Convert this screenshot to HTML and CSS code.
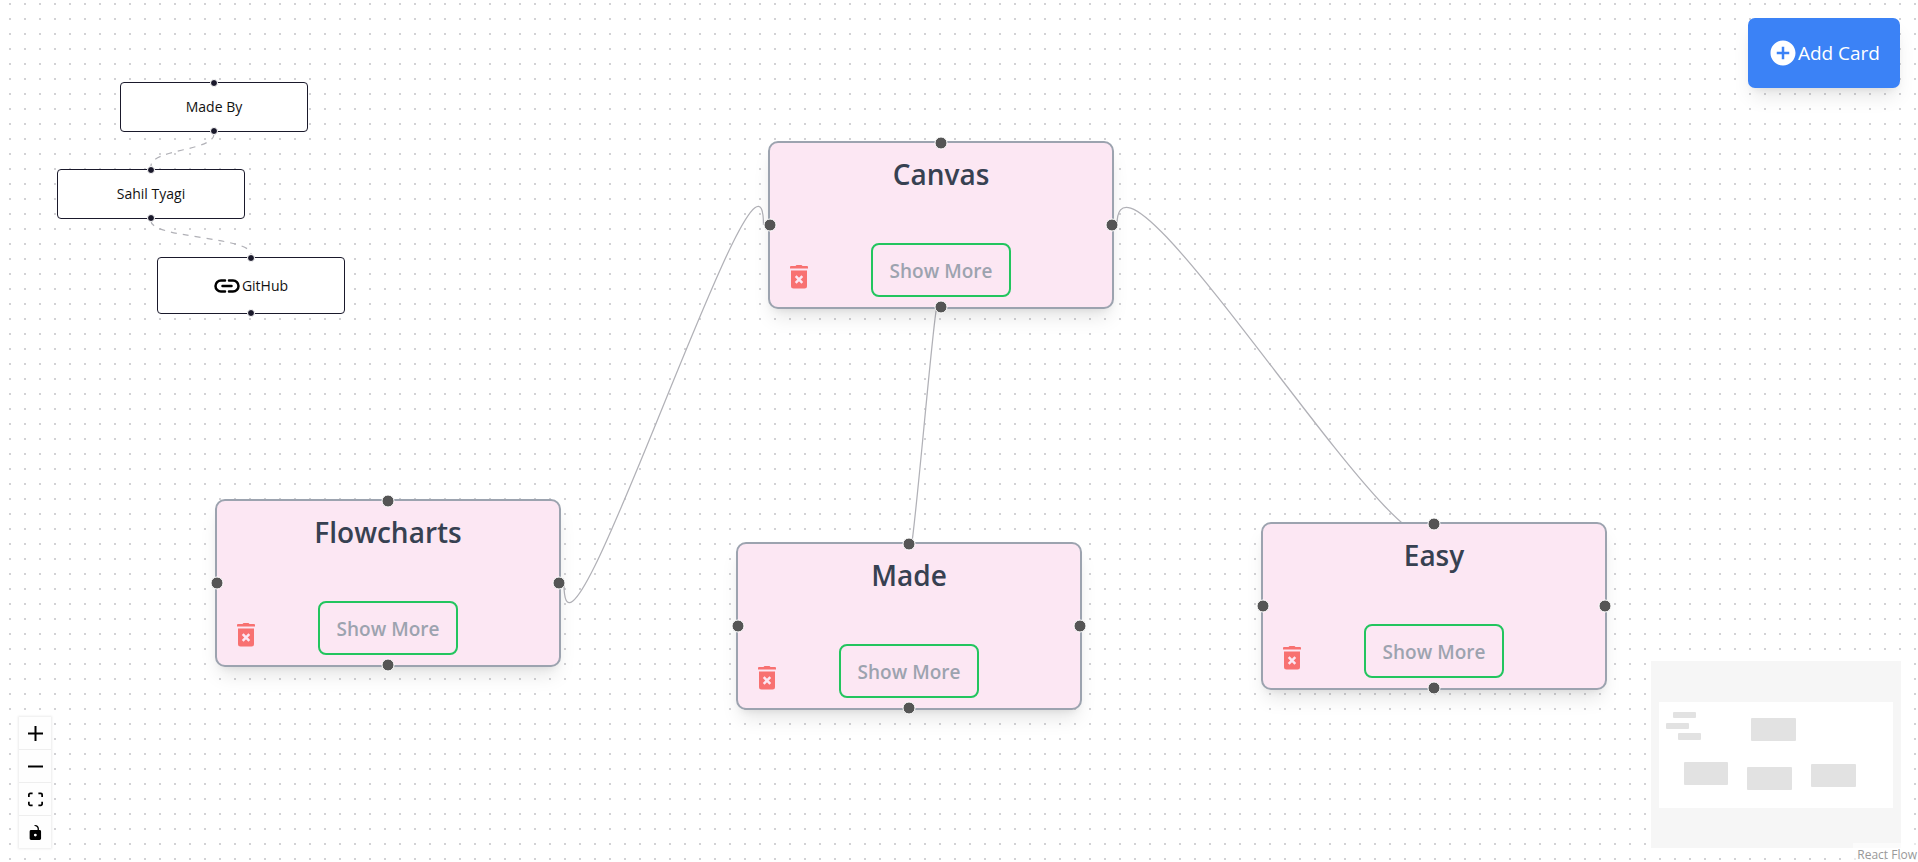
FILE: index.html
```html
<!DOCTYPE html>
<html lang="en">
<head>
<meta charset="utf-8">
<title>React Flow</title>
<link rel="stylesheet" href="styles.css">
</head>
<body>
<svg class="defs" aria-hidden="true">
  <symbol id="trash" viewBox="0 0 18 24">
    <path fill="currentColor" d="M5.500 1 6.500 0h5l1 1H17q1 0 1 1v1.500H0V2q0-1 1-1zM1 5.500h16V21q0 2.500-2.500 2.500h-11Q1 23.500 1 21z"/>
    <path class="trash-cross" d="M5.700 11.200l6.600 6.600M12.300 11.200l-6.600 6.600"/>
  </symbol>
</svg>
<main class="flow">
  <svg class="edges" aria-hidden="true">
    <path class="dashed" d="M214 134C214 151 151 149 151 166"/>
    <path class="dashed" d="M151 221C151 238 251 237 251 254"/>
    <path d="M763.500 225C763.500 92 564 717 564 584"/>
    <path d="M940 313C940 208 908 645 908 540"/>
    <path d="M1117 225C1117 105 1434 638 1434 518"/>
  </svg>

  <div class="node credit made-by"><i class="dot top"></i>Made By<i class="dot bottom"></i></div>
  <div class="node credit author"><i class="dot top"></i>Sahil Tyagi<i class="dot bottom"></i></div>
  <div class="node credit github"><i class="dot top"></i><a href="#"><svg class="link-icon" viewBox="0 0 26 14" aria-hidden="true"><path d="M11 1.500H7a5.500 5.500 0 0 0 0 11h4M15 1.500h4a5.500 5.500 0 0 1 0 11h-4M8.500 7h9"/></svg>GitHub</a><i class="dot bottom"></i></div>

  <article class="node card canvas"><i class="dot top"></i><i class="dot left"></i><i class="dot right"></i><i class="dot bottom"></i>
    <h2>Canvas</h2>
    <div class="actions"><button class="delete" aria-label="Delete"><svg><use href="#trash"/></svg></button><button class="more">Show More</button></div>
  </article>
  <article class="node card flowcharts"><i class="dot top"></i><i class="dot left"></i><i class="dot right"></i><i class="dot bottom"></i>
    <h2>Flowcharts</h2>
    <div class="actions"><button class="delete" aria-label="Delete"><svg><use href="#trash"/></svg></button><button class="more">Show More</button></div>
  </article>
  <article class="node card made"><i class="dot top"></i><i class="dot left"></i><i class="dot right"></i><i class="dot bottom"></i>
    <h2>Made</h2>
    <div class="actions"><button class="delete" aria-label="Delete"><svg><use href="#trash"/></svg></button><button class="more">Show More</button></div>
  </article>
  <article class="node card easy"><i class="dot top"></i><i class="dot left"></i><i class="dot right"></i><i class="dot bottom"></i>
    <h2>Easy</h2>
    <div class="actions"><button class="delete" aria-label="Delete"><svg><use href="#trash"/></svg></button><button class="more">Show More</button></div>
  </article>

  <button class="add-card"><svg viewBox="0 0 24 24" aria-hidden="true"><path fill="currentColor" d="M12 2C6.480 2 2 6.480 2 12s4.480 10 10 10 10-4.480 10-10S17.520 2 12 2zm5 11h-4v4h-2v-4H7v-2h4V7h2v4h4v2z"/></svg>Add Card</button>

  <div class="controls">
    <button aria-label="Zoom in"><svg viewBox="0 0 32 32"><path d="M32 18.133H18.133V32h-4.266V18.133H0v-4.266h13.867V0h4.266v13.867H32z"/></svg></button>
    <button aria-label="Zoom out"><svg viewBox="0 0 32 32"><path d="M0 13.900h32v4.200H0z"/></svg></button>
    <button aria-label="Fit view"><svg viewBox="0 0 32 30"><path d="M3.692 4.630c0-.530.400-.938.939-.938h5.215V0H4.708C2.130 0 0 2.054 0 4.630v5.216h3.692V4.631zM27.354 0h-5.200v3.692h5.170c.530 0 .984.400.984.939v5.215H32V4.631A4.624 4.624 0 0 0 27.354 0zm.954 24.830c0 .532-.400.940-.939.940h-5.215v3.768h5.215c2.577 0 4.631-2.130 4.631-4.707v-5.139h-3.692v5.139zm-23.677.940a.919.919 0 0 1-.939-.940v-5.138H0v5.139c0 2.577 2.130 4.707 4.708 4.707h5.138V25.770H4.631z"/></svg></button>
    <button aria-label="Toggle interactivity"><svg viewBox="0 0 25 32"><path d="M21.333 10.667H19.810V7.619C19.810 3.429 16.380 0 12.190 0c-4.114 1.828-1.370 2.133.305 2.438 1.676.305 4.420 2.590 4.420 5.181v3.048H3.047A3.056 3.056 0 0 0 0 13.714v15.238A3.056 3.056 0 0 0 3.048 32h18.285a3.056 3.056 0 0 0 3.048-3.048V13.714a3.056 3.056 0 0 0-3.048-3.047zM12.190 24.533a3.056 3.056 0 0 1-3.047-3.047 3.056 3.056 0 0 1 3.047-3.048 3.056 3.056 0 0 1 3.048 3.048 3.056 3.056 0 0 1-3.048 3.047z"/></svg></button>
  </div>

  <svg class="minimap" viewBox="0 0 250 187" role="img" aria-label="Mini map">
    <rect class="view" x="8" y="41" width="234" height="106"/>
    <g>
      <rect x="22" y="51" width="23" height="6" rx="1"/>
      <rect x="15" y="62" width="23" height="6" rx="1"/>
      <rect x="27" y="72" width="23" height="7" rx="1"/>
      <rect x="100" y="57" width="45" height="23" rx="1"/>
      <rect x="33" y="101" width="44" height="23" rx="1"/>
      <rect x="96" y="106" width="45" height="23" rx="1"/>
      <rect x="160" y="103" width="45" height="23" rx="1"/>
    </g>
  </svg>
  <a class="attribution" href="#">React Flow</a>
</main>
</body>
</html>
```
FILE: styles.css
```css
* { box-sizing: border-box; }
body { margin: 0; font-family: "Open Sans", "Noto Sans", sans-serif; }
button { font: inherit; cursor: pointer; padding: 0; border: 0; background: none; }
a { color: inherit; text-decoration: none; }
.defs { position: absolute; width: 0; height: 0; }
.trash-cross { stroke: #fce7f3; stroke-width: 2.500; fill: none; }

.flow {
  position: relative;
  height: 100vh;
  overflow: hidden;
  background-color: #fff;
  background-image: radial-gradient(circle at 10px 4px, #d2d2d5 0, #d2d2d5 1px, transparent 1px);
  background-size: 15px 15px;
}
.edges { position: absolute; inset: 0; width: 100%; height: 100%; fill: none; stroke: #b1b1b7; stroke-width: 1.250; }
.dashed { stroke-dasharray: 6; }

.node { position: absolute; }
.dot { position: absolute; border: 1px solid #fff; border-radius: 50%; transform: translate(-50%, -50%); }

.credit {
  width: 188px;
  padding: 13px 12px;
  border: 1px solid #1a192b;
  border-radius: 4px;
  background: #fff;
  color: #111;
  font-size: 14px;
  line-height: 22px;
  text-align: center;
}
.credit a { display: flex; align-items: center; justify-content: center; gap: 2px; height: 29px; }
.credit .dot { width: 8px; height: 8px; background: #1a192b; left: 50%; }
.credit .top { top: 0; }
.credit .bottom { top: 100%; }
.link-icon { width: 26px; height: 14px; fill: none; stroke: #000; stroke-width: 2.500; stroke-linecap: round; }
.made-by { left: 120px; top: 82px; }
.author { left: 57px; top: 169px; }
.github { left: 157px; top: 257px; }

.card {
  display: flex;
  flex-direction: column;
  justify-content: space-between;
  width: 346px;
  height: 168px;
  padding: 11px 20px 10px;
  border: 2px solid #9ca3af;
  border-radius: 10px;
  background: #fce7f3;
  box-shadow: 0 12px 19px -4px rgba(0, 0, 0, .1), 0 5px 8px -5px rgba(0, 0, 0, .1);
}
.card h2 { margin: 0; color: #374151; font-size: 28px; line-height: 40px; font-weight: 600; text-align: center; }
.card .dot { width: 13px; height: 13px; background: #555; }
.card .top { left: 50%; top: 0; }
.card .bottom { left: 50%; top: 100%; }
.card .left { left: 0; top: 50%; }
.card .right { left: 100%; top: 50%; }
.actions { display: grid; grid-template-columns: 1fr auto 1fr; align-items: end; }
.delete { display: flex; align-items: start; justify-self: start; width: 20px; height: 32px; color: #f87171; }
.delete svg { display: block; width: 18px; height: 24px; }
.more { width: 140px; height: 54px; padding-top: 2px; border: 2px solid #22c55e; border-radius: 8px; color: #9ca3af; font-size: 19px; font-weight: 600; }
.canvas { left: 768px; top: 141px; }
.flowcharts { left: 215px; top: 499px; }
.made { left: 736px; top: 542px; }
.easy { left: 1261px; top: 522px; }

.add-card {
  position: absolute;
  top: 18px;
  right: 18px;
  display: flex;
  align-items: center;
  padding: 20px;
  border-radius: 7px;
  background: #3b82f6;
  color: #fff;
  font-size: 19px;
  line-height: 30px;
  box-shadow: 0 12px 19px -4px rgba(0, 0, 0, .1), 0 5px 8px -5px rgba(0, 0, 0, .1);
}
.add-card svg { width: 30px; height: 30px; }

.controls { position: absolute; left: 19px; bottom: 14px; display: flex; flex-direction: column; box-shadow: 0 0 2px 1px rgba(0, 0, 0, .08); }
.controls button { display: flex; align-items: center; justify-content: center; width: 32px; height: 33px; background: #fefefe; border-bottom: 1px solid #eee; }
.controls button:last-child { height: 32px; border-bottom: 0; }
.controls svg { width: 15px; height: 15px; }

.minimap { position: absolute; right: 17px; bottom: 14px; width: 250px; height: 187px; background: #f6f6f6; fill: #e2e2e2; }
.view { fill: #fff; }
.attribution { position: absolute; right: 0; bottom: 0; padding: 4px 1px 0 4px; background: rgba(255, 255, 255, .5); color: #999; font-size: 12px; line-height: 15px; }
```
